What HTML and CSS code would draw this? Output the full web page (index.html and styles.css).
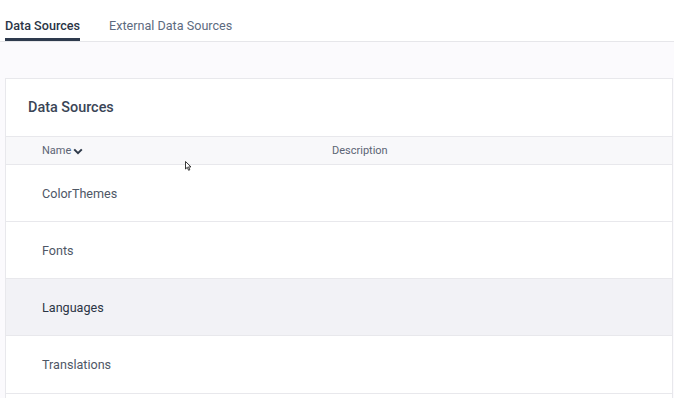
FILE: index.html
```html
<!DOCTYPE html>
<html lang="en">
<head>
  <meta charset="UTF-8" />
  <meta name="viewport" content="width=device-width, initial-scale=1.0" />
  <title>Data Sources</title>
  <link rel="stylesheet" href="styles.css">
</head>
<body>
  <nav class="tabs">
    <a class="tab active" href="#">Data Sources</a>
    <a class="tab" href="#">External Data Sources</a>
  </nav>

  <main class="content">
    <section class="card">
      <h2 class="card-title">Data Sources</h2>

      <div class="table">
        <div class="row head">
          <div class="cell">
            Name
            <svg class="sort" width="10" height="7" viewBox="0 0 10 7">
              <path d="M1.2 1.4 L5 5.2 L8.8 1.4" fill="none" stroke="#2f3a4a" stroke-width="2" />
            </svg>
          </div>
          <div class="cell">Description</div>
        </div>
        <div class="row"><div class="cell">ColorThemes</div><div class="cell"></div></div>
        <div class="row"><div class="cell">Fonts</div><div class="cell"></div></div>
        <div class="row hover"><div class="cell">Languages</div><div class="cell"></div></div>
        <div class="row"><div class="cell">Translations</div><div class="cell"></div></div>
      </div>
    </section>
  </main>

  <svg class="cursor" width="7" height="10" viewBox="0 0 7 10">
    <path d="M0.5 0.5 L0.5 8 L2.3 6.3 L3.6 9.3 L4.8 8.8 L3.6 5.9 L6 5.9 Z" fill="#ffffff" stroke="#222" stroke-width="0.9" />
  </svg>
</body>
</html>
```

FILE: styles.css
```css
* {
  box-sizing: border-box;
}

body {
  margin: 0;
  font-family: Roboto, 'Liberation Sans', sans-serif;
  background: #ffffff;
  color: #4a5261;
  overflow: hidden;
  position: relative;
}

.tabs {
  display: flex;
  gap: 29px;
  padding-left: 5px;
  height: 42px;
  border-bottom: 1px solid #e6e6ea;
}

.tab {
  display: block;
  padding-top: 18px;
  height: 41px;
  font-size: 12.6px;
  line-height: 15px;
  color: #5d6b80;
  text-decoration: none;
  border-bottom: 3px solid transparent;
}

.tab.active {
  color: #2b3546;
  font-weight: 500;
  border-bottom-color: #2e3a4d;
}

.content {
  background: #fbfafd;
  padding: 36px 1px 0 5px;
  height: 356px;
}

.card {
  background: #ffffff;
  border: 1px solid #e8e8ec;
  border-bottom: none;
  height: 100%;
}

.card-title {
  margin: 0;
  height: 57px;
  padding: 19px 22px 0;
  font-size: 14.4px;
  line-height: 20px;
  font-weight: 500;
  color: #3a4556;
}

.row {
  display: grid;
  grid-template-columns: 290px 1fr;
  padding-left: 36px;
  height: 57px;
  align-items: center;
  border-bottom: 1px solid #e8e8ec;
  font-size: 12.6px;
  color: #4e5766;
}

.row.head {
  height: 29px;
  border-top: 1px solid #e8e8ec;
  background: #f8f8fa;
  font-size: 11px;
  color: #5b6474;
}

.row.head .cell {
  display: flex;
  align-items: center;
  gap: 2px;
}

.sort {
  margin-top: 1px;
}

.row.hover {
  background: #f2f2f6;
  color: #2b3545;
}

.row:last-child {
  height: 58px;
}

.cursor {
  position: absolute;
  left: 185px;
  top: 161px;
}
```
